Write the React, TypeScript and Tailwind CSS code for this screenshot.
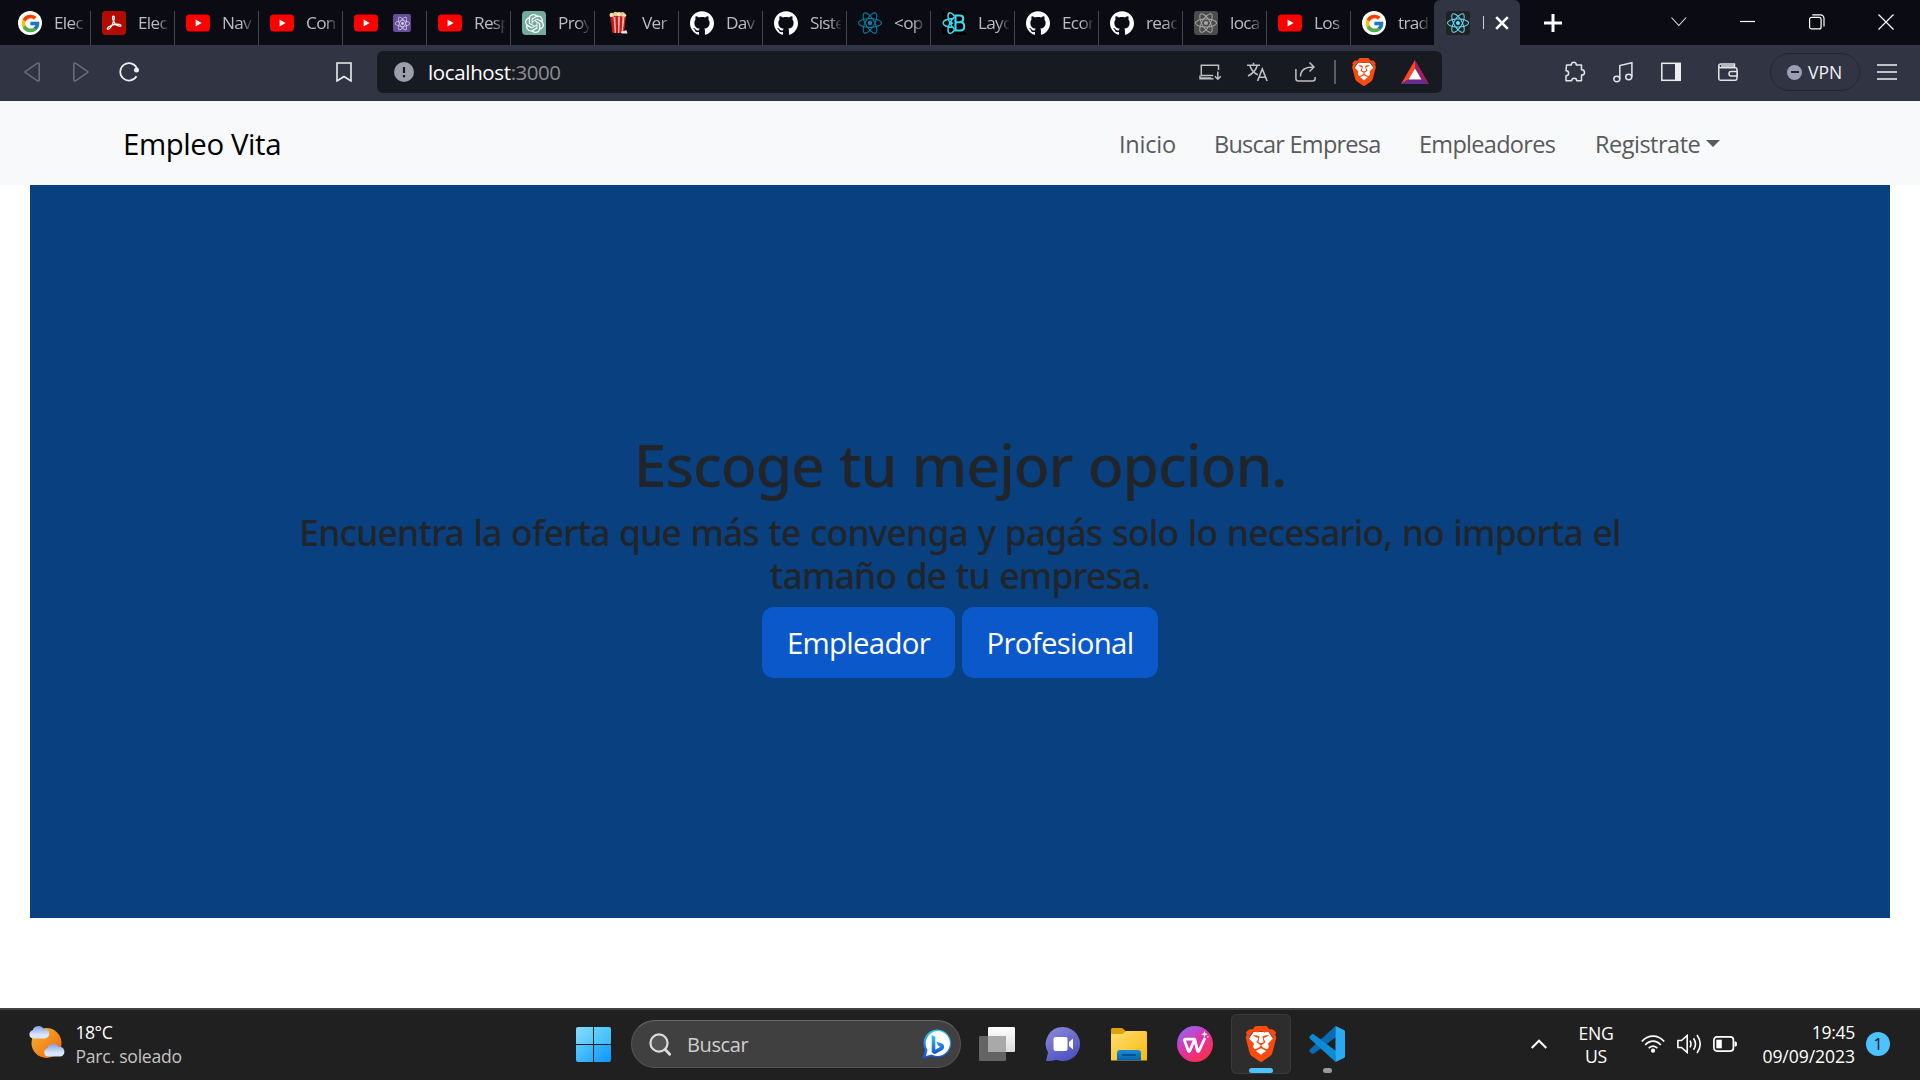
import type { ReactNode } from "react";
import { FcGoogle } from "react-icons/fc";
import { SiBrave, SiGithub, SiOpenai, SiReact } from "react-icons/si";

/* ---------- favicons ---------- */

const Google = () => (
  <span className="grid size-6 place-items-center rounded-full bg-white">
    <FcGoogle size={21} />
  </span>
);

const Acrobat = () => (
  <svg viewBox="0 0 24 24" className="size-6">
    <rect width="24" height="24" rx="3.5" fill="#b30b00" />
    <path
      d="M11.2 5.2c1.3-.5 1.3 2.2.3 5.2-1 3-3.300 7.300-5 7.800-1.700.4-1.600-1.200.4-2.500 2.600-1.700 7.600-2.900 10.400-2.400 2.200.4 2 2 .3 1.900-2.400-.2-5.100-2.800-6.200-5.400-.8-1.900-1-4.200-.2-4.600z"
      fill="none"
      stroke="#fff"
      strokeWidth="1.3"
    />
  </svg>
);

const YouTube = () => (
  <svg viewBox="0 0 24 24" className="size-6">
    <rect y="3.600" width="24" height="16.800" rx="3.600" fill="#f00" />
    <path d="M9.600 8.500v7l6-3.500z" fill="#fff" />
  </svg>
);

const OpenAi = () => (
  <span className="grid size-6 place-items-center rounded-tl-sm rounded-tr-sm rounded-bl-sm bg-[#74aa9c] text-white">
    <SiOpenai size={19} />
  </span>
);

const Popcorn = () => (
  <svg viewBox="0 0 24 24" className="size-6">
    <path d="M4 4.500 6.500 22H18l2-17.500z" fill="#c8191b" />
    <path d="M7.500 6l1.200 16h1.300L9.300 6zM12 6v16h1.300L14 6zM16.500 6l-1 16h1.200L18.500 6z" fill="#f0b8ac" />
    <circle cx="5.800" cy="4" r="2.300" fill="#f3dfae" />
    <circle cx="9.500" cy="3" r="2.300" fill="#e8c98a" />
    <circle cx="13" cy="3.200" r="2.300" fill="#f6e6be" />
    <circle cx="16.500" cy="3.400" r="2.300" fill="#e8c98a" />
    <circle cx="18.500" cy="4.300" r="1.700" fill="#f3dfae" />
    <path d="M15 20.500l5.500-1.300 1 3.300H15.500z" fill="#f0dccb" />
  </svg>
);

const GitHub = () => <SiGithub className="size-6 text-white" />;
const ReactBlue = () => <SiReact className="size-6 text-[#087ea4]" />;

const ReactGray = () => (
  <span className="grid size-6 place-items-center rounded-[3px] bg-[#4b4b4b] text-[#a5a5a5]">
    <SiReact size={22} />
  </span>
);

const ReactDark = () => (
  <span className="grid size-6 place-items-center rounded-[3px] bg-[#222] text-[#61dafb]">
    <SiReact size={22} />
  </span>
);

const ReactBootstrap = () => (
  <svg viewBox="0 0 24 24" className="size-6 bg-black" fill="none" stroke="#41d7f0" strokeWidth="2.100">
    <path d="M13.500 4.500h4.500c4.300 0 4.300 6.700 0 6.700h-4.500zM13.500 11.300h5c5 0 5 8.200 0 8.200h-5z" />
    <path
      d="M12.500 5C9.500.5 6 .5 6 5c0 4 2.500 9 6.500 13.500M12.500 19c-3 4.500-6.500 4.500-6.500 0 0-4 2.500-9 6.500-13.500M12 7.500C-2.500 8-2.500 16 12 16.500"
      strokeWidth="1.500"
    />
    <circle cx="9.500" cy="12" r="1.500" fill="#41d7f0" stroke="none" />
  </svg>
);

const AtomBadge = () => (
  <span className="grid size-[18px] place-items-center rounded-[2px] bg-[#664d99] text-[#d8d0e8]">
    <SiReact size={15} />
  </span>
);

/* ---------- tab strip ---------- */

type TabInfo = { icon: ReactNode; label: ReactNode };

const tabs: TabInfo[] = [
  { icon: <Google />, label: "Elec" },
  { icon: <Acrobat />, label: "Elec" },
  { icon: <YouTube />, label: "Nav" },
  { icon: <YouTube />, label: "Con" },
  { icon: <YouTube />, label: <span className="ml-[3px] flex"><AtomBadge /></span> },
  { icon: <YouTube />, label: "Resp" },
  { icon: <OpenAi />, label: "Proy" },
  { icon: <Popcorn />, label: "Ver" },
  { icon: <GitHub />, label: "Dav" },
  { icon: <GitHub />, label: "Siste" },
  { icon: <ReactBlue />, label: "<op" },
  { icon: <ReactBootstrap />, label: "Layo" },
  { icon: <GitHub />, label: "Ecor" },
  { icon: <GitHub />, label: "reac" },
  { icon: <ReactGray />, label: "loca" },
  { icon: <YouTube />, label: "Los" },
  { icon: <Google />, label: "trad" },
];

function Tab({ icon, label, last }: TabInfo & { last: boolean }) {
  return (
    <div className="relative flex h-[45px] w-[84px] shrink-0 items-start pt-[11px] pl-[11px]">
      {icon}
      <div className="ml-3 flex h-6 w-[31px] items-center overflow-hidden text-[17.200px] tracking-[-0.7px] whitespace-nowrap text-[#bcbcc0] [mask-image:linear-gradient(90deg,#000_62%,rgba(0,0,0,0.12))]">
        {label}
      </div>
      {!last && <span className="absolute right-0 bottom-0 h-[34px] w-px bg-[#44444a]" />}
    </div>
  );
}

function TabStrip() {
  return (
    <div className="flex h-[45px] bg-[#0b0b14] pl-[7px]">
      {tabs.map((t, i) => (
        <Tab key={i} {...t} last={i === tabs.length - 1} />
      ))}
      <div className="-ml-px flex h-[45px] w-[86px] shrink-0 items-start rounded-t-[6px] bg-[#313442] pt-[11px] pl-3">
        <ReactDark />
        <span className="mt-[5px] ml-[13px] h-[13px] w-px bg-[#d0d0d4]" />
        <svg viewBox="0 0 14 14" className="mt-[5px] ml-[11px] size-3.5" stroke="#fff" strokeWidth="2.600">
          <path d="M1.200 1.200l11.600 11.600M12.800 1.200L1.200 12.800" />
        </svg>
      </div>
      <svg viewBox="0 0 18 18" className="mt-[14px] ml-[24px] size-[18px]" stroke="#fff" strokeWidth="3">
        <path d="M9 0v18M0 9h18" />
      </svg>
      <svg viewBox="0 0 16 16" className="mt-[14px] ml-[109px] size-4" fill="none" stroke="#e4e4e8" strokeWidth="1.100">
        <path d="M.5 3.500l7.300 8 7.300-8" />
      </svg>
      <svg viewBox="0 0 16 16" className="mt-[14px] ml-[53px] size-4" stroke="#fff" strokeWidth="1.200">
        <path d="M0 7.500h15" />
      </svg>
      <svg viewBox="0 0 16 16" className="mt-[14px] ml-[53px] size-4" fill="none" stroke="#fff" strokeWidth="1.200">
        <rect x=".6" y="3.400" width="11.500" height="11.500" rx="2" />
        <path d="M3.300.9h8.200a3.500 3.500 0 0 1 3.500 3.500v8" />
      </svg>
      <svg viewBox="0 0 16 16" className="mt-[14px] ml-[53px] size-4" stroke="#fff" strokeWidth="1.200">
        <path d="M.5.5l15 15M15.500.5l-15 15" />
      </svg>
    </div>
  );
}

/* ---------- toolbar ---------- */

function BraveLion({ className }: { className: string }) {
  return (
    <span className={`relative grid place-items-center ${className}`}>
      <svg viewBox="0 0 24 24" className="absolute inset-0 size-full">
        <path d="M7 4h10l3.500 5-3.500 9-5 4-5-4-3.500-9z" fill="#fff" />
      </svg>
      <SiBrave className="relative size-full text-[#fb4a10]" />
    </span>
  );
}

function AddressBar() {
  return (
    <div className="flex h-[42px] w-[1065px] items-center rounded-md bg-[#181a22] pl-[17px]">
      <svg viewBox="0 0 20 20" className="size-5">
        <circle cx="10" cy="10" r="10" fill="#9c9fab" />
        <path d="M10 5v6M10 13v2.200" stroke="#181a22" strokeWidth="2.200" />
      </svg>
      <div className="ml-[14px] w-[756px] text-[20.500px] leading-[42px] whitespace-nowrap">
        <span className="tracking-[-0.35px] text-white">localhost</span>
        <span className="tracking-[-0.5px] text-[#8b8d94]">:3000</span>
      </div>
      <svg viewBox="0 0 22 20" className="ml-[15px] h-5 w-[22px]" fill="none" stroke="#bfbfc2" strokeWidth="1.500">
        <path d="M19.500 8V3.300H2.300v10.200h12M1 13.500v3.300h13.500M1 16h11M18.800 9.500V17M15.800 14.300l3 2.900 3-2.900" />
      </svg>
      <svg viewBox="0 0 22 20" className="ml-[26px] h-5 w-[22px]" fill="none" stroke="#bfbfc2" strokeWidth="1.600">
        <path d="M0 3.300h13M6.500.800v2.500M2.800 3.300c1.500 5 4.500 8 8 9.500M10.300 3.300C9 8.500 6 11.500 1 14M10.500 19l4.800-12 4.800 12M12 15.300h6.600" />
      </svg>
      <svg viewBox="0 0 22 22" className="ml-[26px] size-[22px]" fill="none" stroke="#bfbfc2" strokeWidth="1.500">
        <path d="M.9 8v9.500q0 2.500 2.500 2.500h14.200q2.500 0 2.500-2.500V16M5.500 15.500c0-6 4-9.500 13-9.500M14.500 1.500L19 6l-4.500 4.500" />
      </svg>
      <span className="ml-[17px] h-6 w-0.5 bg-[#5b5d66]" />
      <BraveLion className="ml-[14px] size-[28px]" />
      <svg viewBox="0 0 28 24" className="ml-[23px] h-6 w-7">
        <path d="M14 0L0 24l7.500-4.500L14 8.500z" fill="#ff4724" />
        <path d="M14 0l14 24-7.500-4.500L14 8.500z" fill="#9e1f63" />
        <path d="M0 24h28l-7.500-4.700h-13z" fill="#662d91" />
        <path d="M14 8.500l6.500 11h-13z" fill="#fff" />
      </svg>
    </div>
  );
}

function Toolbar() {
  return (
    <div className="flex h-14 items-center bg-[#313442] pb-0.5 pl-6">
      <svg viewBox="0 0 16 20" className="h-5 w-4" fill="none" stroke="#696c78" strokeWidth="1.600" strokeLinejoin="round">
        <path d="M13.500 1.200L1.500 9.300q-.8.700 0 1.400l12 8.100q1.500.6 1.700-1V2.200q-.2-1.600-1.700-1z" />
      </svg>
      <svg viewBox="0 0 16 20" className="ml-[33px] h-5 w-4" fill="none" stroke="#696c78" strokeWidth="1.600" strokeLinejoin="round">
        <path d="M2.500 1.200l12 8.100q.8.700 0 1.400l-12 8.100q-1.500.6-1.700-1V2.200q.2-1.600 1.700-1z" />
      </svg>
      <svg viewBox="0 0 20 20" className="ml-[30px] size-5" fill="none" stroke="#ededf0" strokeWidth="1.700">
        <path d="M17.500 14.200A8.700 8.700 0 1 1 17.800 6" />
        <circle cx="17.500" cy="8" r="2.500" fill="#ededf0" stroke="none" />
      </svg>
      <svg viewBox="0 0 16 20" className="ml-[197px] h-5 w-4" fill="none" stroke="#ededf0" strokeWidth="1.600">
        <path d="M1 1h14v18l-7-4.500L1 19z" />
      </svg>
      <div className="ml-[25px]">
        <AddressBar />
      </div>
      <svg viewBox="0 0 22 22" className="ml-[122px] size-[22px]" fill="none" stroke="#e4e4e8" strokeWidth="1.500" strokeLinejoin="round">
        <path d="M2.500 4h4.800c0-3.800 5-3.800 5 0h5.200v4.800c4 0 4 5.200 0 5.200v5.800h-4.800c0-3.500-5-3.500-5 0H2v-5c3.500 0 3.500-5 0-5z" />
      </svg>
      <svg viewBox="0 0 20 22" className="ml-[27px] h-[22px] w-5" fill="none" stroke="#e4e4e8" strokeWidth="1.500">
        <ellipse cx="3.800" cy="18" rx="3" ry="2.700" />
        <ellipse cx="15.700" cy="16" rx="3" ry="2.700" />
        <path d="M6.800 18V4.600L18.900 1.700V16" />
      </svg>
      <svg viewBox="0 0 20 20" className="ml-[28px] size-5">
        <rect x=".8" y="1.300" width="18.400" height="17" fill="none" stroke="#ededf0" strokeWidth="1.500" />
        <path d="M14 1h6v18h-6z" fill="#ededf0" />
      </svg>
      <svg viewBox="0 0 20 20" className="ml-[37px] size-5" fill="none" stroke="#e4e4e8" strokeWidth="1.500">
        <path d="M.8 3.500v13q0 1.700 1.700 1.700h14.800q1.700 0 1.700-1.700v-9q0-1.700-1.700-1.700H3q-2.200 0-2.200-2 0-1.900 2.200-1.900h13.500v4M3 3.900h13.500M19.200 9.500h-6q-2.200 0-2.200 2.200 0 2.300 2.200 2.300h6z" />
      </svg>
      <div className="ml-8 flex h-[38px] w-[90px] items-center rounded-full border-[1.500px] border-[#232532] pl-[16px]">
        <span className="grid size-[15px] place-items-center rounded-full bg-[#9c9eb3]">
          <span className="h-0.5 w-2 bg-[#232532]" />
        </span>
        <span className="ml-[6px] pt-px text-[17.500px] leading-none text-[#f1f1f4]">VPN</span>
      </div>
      <svg viewBox="0 0 20 16" className="ml-[17px] h-4 w-5" stroke="#f1f1f4" strokeWidth="1.600">
        <path d="M0 1h20M0 8h20M0 15h20" />
      </svg>
    </div>
  );
}

/* ---------- page ---------- */

function SiteNav() {
  return (
    <nav className="flex h-[84px] bg-[#f8f9fa] pl-[123px] whitespace-nowrap">
      <div className="w-[996px] pt-px text-[29.400px] leading-[84px] tracking-[-0.400px] text-black">Empleo Vita</div>
      <div className="flex pt-px text-[23.500px] leading-[84px] text-[#595a5a]">
        <a className="w-[95px] tracking-[-0.2px]">Inicio</a>
        <a className="w-[205px] tracking-[-0.75px]">Buscar Empresa</a>
        <a className="w-44 tracking-[-0.7px]">Empleadores</a>
        <a className="flex tracking-[-0.5px]">
          Registrate
          <span className="mt-[38px] ml-[6px] size-0 border-x-[7px] border-t-[7px] border-x-transparent border-t-[#595a5a]" />
        </a>
      </div>
    </nav>
  );
}

function Hero() {
  return (
    <section className="mx-[30px] flex h-[733px] flex-col items-center bg-[#084080] pt-[243px] text-center text-[#212529]">
      <h1 className="font-['Noto_Sans',sans-serif] text-[58.800px] leading-[72px] font-[550] tracking-[-1.050px] [word-spacing:1px]">
        Escoge tu mejor opcion.
      </h1>
      <h2 className="mt-[11px] w-[1395px] font-['Noto_Sans',sans-serif] text-[35.300px] leading-[43px] font-[550] tracking-[-0.760px] [word-spacing:1px]">
        Encuentra la oferta que más te convenga y pagás solo lo necesario, no importa el
        <br />
        tamaño de tu empresa.
      </h2>
      <div className="mt-[10px] flex gap-[7px] text-[29.400px] leading-[73px] text-white">
        <button className="h-[71px] w-[193px] rounded-xl bg-[#0a58ca] tracking-[-0.700px]">Empleador</button>
        <button className="h-[71px] w-[196px] rounded-xl bg-[#0a58ca] tracking-[-0.700px]">Profesional</button>
      </div>
    </section>
  );
}

/* ---------- taskbar ---------- */

const Weather = () => (
  <svg viewBox="0 0 38 36" className="h-9 w-[38px]">
    <defs>
      <linearGradient id="sun" x1="0" y1="0" x2="1" y2="1">
        <stop offset="0" stopColor="#f5b82e" />
        <stop offset="1" stopColor="#f0620f" />
      </linearGradient>
      <linearGradient id="cloud" x1="0" y1="0" x2="0" y2="1">
        <stop offset="0" stopColor="#7d9fe6" />
        <stop offset=".7" stopColor="#dbe5fb" />
      </linearGradient>
    </defs>
    <circle cx="18.500" cy="19" r="15" fill="url(#sun)" />
    <path d="M4.500 14.500a4.300 4.300 0 0 1 .2-8.300 6 6 0 0 1 11-1.200 4.800 4.800 0 0 1 1.500 9.500z" fill="url(#cloud)" />
    <path d="M19.500 32.500a4.200 4.200 0 0 1 0-8.200 6 6 0 0 1 11-1.400 4.900 4.900 0 0 1 2 9.600z" fill="url(#cloud)" />
  </svg>
);

const WindowsLogo = () => (
  <span className="-ml-px grid size-[35px] grid-cols-2 gap-px overflow-hidden rounded-[2px]">
    <span className="bg-linear-to-br from-[#84dcff] to-[#52c6fc]" />
    <span className="bg-linear-to-br from-[#66d3ff] to-[#37bafb]" />
    <span className="bg-linear-to-br from-[#54caff] to-[#27a9f8]" />
    <span className="bg-linear-to-br from-[#35b7fd] to-[#0a95ff]" />
  </span>
);

const Bing = () => (
  <svg viewBox="0 0 30 30" className="size-[30px]">
    <defs>
      <linearGradient id="bing" x1="0" y1="0" x2="0" y2="1">
        <stop offset="0" stopColor="#35c8ee" />
        <stop offset="1" stopColor="#1650d8" />
      </linearGradient>
    </defs>
    <path d="M15.500.5a14 14 0 1 1-6 26.800L.5 29.500l2.700-8.200A14 14 0 0 1 15.500.5z" fill="url(#bing)" />
    <path d="M15.500 2a12.500 12.500 0 1 1-6 23.500L4 27l1.500-6A12.500 12.500 0 0 1 15.500 2z" fill="#fff" />
    <path
      d="M9.700 6l3.600 1.800v13l5-3-2.300-1.200-1.600-4.200 6.200 2.300c2.300 1.500 2 5-.5 6.600l-6.500 3.500q-1.300.5-2.500-.5l-1.400-1.300z"
      fill="url(#bing)"
    />
  </svg>
);

const TaskView = () => (
  <svg viewBox="0 0 36 36" className="size-9">
    <defs>
      <linearGradient id="tv" x1="0" y1="0" x2="0" y2="1">
        <stop offset="0" stopColor="#fff" />
        <stop offset="1" stopColor="#dcdcdc" />
      </linearGradient>
    </defs>
    <rect x="9" y="1" width="27" height="25" rx="1.200" fill="url(#tv)" />
    <rect x="0" y="10" width="27" height="25" rx="1.200" fill="#646464" />
    <path d="M9 10h18v16H9z" fill="#a9a9a9" />
  </svg>
);

const Chat = () => (
  <svg viewBox="0 0 36 36" className="-ml-px size-9">
    <defs>
      <linearGradient id="chat" x1="0" y1="0" x2=".6" y2="1">
        <stop offset="0" stopColor="#8f8bd8" />
        <stop offset="1" stopColor="#4f52c4" />
      </linearGradient>
    </defs>
    <path d="M18 1a17 17 0 1 1-6.500 32.700Q6 35.500 1 35l2-8.500A17 17 0 0 1 18 1z" fill="url(#chat)" />
    <rect x="8.500" y="11" width="14" height="14" rx="2" fill="#fff" />
    <path d="M24 16l4-3.500v11L24 20z" fill="#fff" />
  </svg>
);

const Folder = () => (
  <svg viewBox="0 0 36 36" className="size-9">
    <defs>
      <linearGradient id="folder" x1="0" y1="0" x2="1" y2="1">
        <stop offset="0" stopColor="#ffde75" />
        <stop offset="1" stopColor="#fab909" />
      </linearGradient>
      <linearGradient id="tray" x1="0" y1="0" x2="0" y2="1">
        <stop offset="0" stopColor="#1390dd" />
        <stop offset="1" stopColor="#0861a8" />
      </linearGradient>
    </defs>
    <path d="M0 3.500Q0 2 1.500 2h9q1 0 1.700.7L15 5.500V9H0z" fill="#e0a20a" />
    <path d="M0 8h11.500L15 5h19.500Q36 5 36 6.500V34.500H0z" fill="url(#folder)" />
    <path d="M6 34.500V27q0-3 3-3h18q3 0 3 3v7.500z" fill="url(#tray)" />
    <path d="M11 29h14" stroke="#06477d" strokeWidth="1.600" />
  </svg>
);

const Wps = () => (
  <svg viewBox="0 0 36 36" className="size-9">
    <defs>
      <linearGradient id="wps" x1=".1" y1="0" x2=".8" y2="1">
        <stop offset="0" stopColor="#8a6bff" />
        <stop offset=".5" stopColor="#e032a8" />
        <stop offset="1" stopColor="#ff2e3e" />
      </linearGradient>
    </defs>
    <circle cx="18" cy="18" r="18" fill="url(#wps)" />
    <path
      d="M17 13.200H8.300q-1.200 0-.8 1.200l3.800 10.400q.7 1.400 1.500 0L17.700 13.200l2.800 11.600q.7 1.400 1.500 0L27.500 13"
      fill="none"
      stroke="#fff"
      strokeWidth="2.800"
      strokeLinejoin="round"
      strokeLinecap="round"
    />
    <path
      d="M27.500 5l.9 2.300 2.300.9-2.300.9-.9 2.300-.9-2.300-2.300-.9 2.300-.9zM30.800 9.500l.4 1 1 .4-1 .4-.4 1-.4-1-1-.4 1-.4z"
      fill="#fff"
    />
  </svg>
);

const VsCode = () => (
  <svg viewBox="0 0 36 36" className="size-9">
    <path d="M26.500 0L1 23.300q-1.500 1.500 0 2.700l1.700 1.600q1.100.7 2.300 0L27 11z" fill="#0a6ab4" />
    <path d="M26.500 36L1 12.700q-1.500-1.500 0-2.700l1.700-1.600q1.100-.7 2.300 0L27 25z" fill="#0d8bd6" />
    <path d="M26.500 0L35 4q1 .6 1 1.700v24.600q0 1.100-1 1.700L26.500 36z" fill="#29a9f2" />
  </svg>
);

function TaskItem({ children, active, dot }: { children: ReactNode; active?: boolean; dot?: boolean }) {
  return (
    <div
      className={`relative grid size-[60px] place-items-center rounded-md ${active ? "bg-[#2d2d2d] ring-1 ring-[#3a3a3a] ring-inset" : ""}`}
    >
      {children}
      {active && <span className="absolute bottom-px left-[18px] h-[5px] w-6 rounded-full bg-[#4cc2ff]" />}
      {dot && <span className="absolute bottom-px left-[26px] h-[5px] w-[9px] rounded-full bg-[#9a9a9a]" />}
    </div>
  );
}

function Taskbar() {
  return (
    <footer className="flex h-[72px] border-t-2 border-[#414141] bg-[#202020] whitespace-nowrap text-white">
      <div className="flex w-[564px] pl-7">
        <div className="mt-[14px]">
          <Weather />
        </div>
        <div className="ml-[9.500px] pt-[10px] text-[17.600px] leading-6">
          <div className="tracking-[-0.5px]">18°C</div>
          <div className="tracking-[-0.25px] text-[#c4c4c4]">Parc. soleado</div>
        </div>
      </div>
      <div className="flex w-[967px] items-start gap-[6px] pt-1">
        <TaskItem>
          <WindowsLogo />
        </TaskItem>
        <div className="mt-[6px] ml-px flex h-12 w-[330px] items-center rounded-full border-[1.500px] border-[#545454] border-t-[#686868] bg-[#404040] pl-[17px]">
          <svg viewBox="0 0 22 23" className="h-[23px] w-[22px]" fill="none" stroke="#dcdcde" strokeWidth="2.200" strokeLinecap="round">
            <circle cx="10" cy="10" r="8.600" fill="#555" />
            <path d="M16.200 16.500l4.500 4.800" strokeWidth="2.800" />
          </svg>
          <span className="ml-[16px] w-[235px] pt-px text-[20px] leading-none tracking-[-0.4px] text-[#cfcfcf]">Buscar</span>
          <Bing />
        </div>
        <TaskItem>
          <TaskView />
        </TaskItem>
        <TaskItem>
          <Chat />
        </TaskItem>
        <TaskItem>
          <Folder />
        </TaskItem>
        <TaskItem>
          <Wps />
        </TaskItem>
        <TaskItem active>
          <BraveLion className="size-9" />
        </TaskItem>
        <TaskItem dot>
          <VsCode />
        </TaskItem>
      </div>
      <svg viewBox="0 0 16 10" className="mt-[29px] h-2.5 w-4" fill="none" stroke="#fff" strokeWidth="2">
        <path d="M.7 9L8 1.700 15.300 9" />
      </svg>
      <div className="ml-[29px] w-10 pt-[12px] text-center text-[17.600px] leading-[23px] tracking-[-0.350px]">
        <div>ENG</div>
        <div>US</div>
      </div>
      <svg viewBox="0 0 24 18" className="mt-[25px] ml-[25px] h-[18px] w-6" fill="none" stroke="#fff" strokeWidth="1.700">
        <path d="M.8 6.500c6.300-7.200 16.100-7.200 22.400 0M4.200 10c4.500-5.200 11.100-5.200 15.600 0M7.600 13.300c2.600-3 6.200-3 8.800 0" />
        <circle cx="12" cy="15.700" r="2.100" fill="#fff" stroke="none" />
      </svg>
      <svg viewBox="0 0 25 20" className="mt-[24px] ml-3 h-5 w-[25px]" fill="none" stroke="#fff" strokeWidth="1.600">
        <path d="M.9 6.500v7h3.600l5.700 5V1.500l-5.700 5zM13 6.700q2 3.300 0 6.600M16.500 4.200q4 5.800 0 11.600M20 1q6.500 9 0 18" />
      </svg>
      <svg viewBox="0 0 24 16" className="mt-[26px] ml-[11px] h-4 w-6" fill="none" stroke="#fff" strokeWidth="1.700">
        <rect x=".9" y=".9" width="19.500" height="14.200" rx="3" />
        <path d="M3.300 3.700h5.500v8.600H3.300z" fill="#fff" stroke="none" />
        <path d="M21.500 5.500h1.200q1.300 0 1.300 2.500t-1.300 2.500h-1.200z" fill="#fff" stroke="none" />
      </svg>
      <div className="w-[118px] pt-[10px] text-right text-[17.600px] leading-6 tracking-[-0.080px]">
        <div className="tracking-[-0.300px]">19:45</div>
        <div>09/09/2023</div>
      </div>
      <span className="mt-[22px] ml-[11px] grid size-6 place-items-center rounded-full bg-[#4cc2ff] text-[16px] leading-none text-[#111]">
        1
      </span>
    </footer>
  );
}

export default function App() {
  return (
    <div className="flex h-[1080px] w-[1920px] flex-col overflow-hidden bg-white font-['Open_Sans',sans-serif]">
      <TabStrip />
      <Toolbar />
      <SiteNav />
      <Hero />
      <div className="flex-1 bg-white" />
      <Taskbar />
    </div>
  );
}
